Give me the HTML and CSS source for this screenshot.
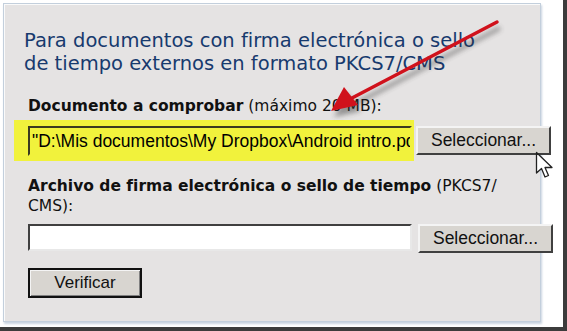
FILE: index.html
```html
<!DOCTYPE html>
<html lang="es">
<head>
    <meta charset="UTF-8">
    <title>Verificar firma</title>
    <link rel="stylesheet" href="styles.css">
</head>
<body>

<div class="frame">
    <div class="panel">
        <h2 class="titulo">Para documentos con firma electrónica o sello de tiempo externos en formato PKCS7/CMS</h2>

        <div class="campo">
            <label class="etiqueta"><b>Documento a comprobar</b> (máximo 20 MB):</label>
            <div class="fila">
                <div class="resaltado">
                    <div class="entrada">"D:\Mis documentos\My Dropbox\Android intro.pdf"</div>
                </div>
                <button class="btn-sel">Seleccionar...</button>
            </div>
        </div>

        <div class="campo">
            <label class="etiqueta"><b>Archivo de firma electrónica o sello de tiempo</b> (PKCS7/<br>CMS):</label>
            <div class="fila fila-vacia">
                <div class="entrada vacia"></div>
                <button class="btn-sel">Seleccionar...</button>
            </div>
        </div>

        <button class="btn-verificar">Verificar</button>
    </div>

    <!-- flecha roja de anotación -->
    <svg class="flecha" width="567" height="331" viewBox="0 0 567 331">
        <defs>
            <filter id="sombra" x="-20%" y="-20%" width="140%" height="140%">
                <feGaussianBlur stdDeviation="2.5"/>
            </filter>
        </defs>
        <g transform="translate(3,6)" opacity="0.45" filter="url(#sombra)">
            <line x1="497" y1="22" x2="352" y2="98" stroke="#333" stroke-width="4"/>
            <polygon points="331,111 344,87 358,105" fill="#333"/>
        </g>
        <line x1="497" y1="22" x2="352" y2="98" stroke="#d0121c" stroke-width="3.5" stroke-linecap="round"/>
        <polygon points="331,111 344,87 358,105" fill="#d0121c"/>
    </svg>

    <!-- cursor -->
    <svg class="cursor" width="22" height="30" viewBox="0 0 22 30">
        <path d="M1.5 1.5 L1.5 22 L6.5 17.5 L10 26 L13.5 24.5 L10 16.5 L17 16.5 Z" fill="#fff" stroke="#222" stroke-width="1.3" stroke-linejoin="round"/>
    </svg>
</div>

</body>
</html>
```

FILE: styles.css
```css
body {
    margin: 0;
    background: #fff;
    font-family: "DejaVu Sans", Verdana, sans-serif;
}

/* marco de la captura */
.frame {
    position: relative;
    width: 563px;
    height: 327px;
    border-right: 4px solid #3c3c3c;
    border-bottom: 4px solid #3c3c3c;
    background: #fff;
    overflow: hidden;
}

.panel {
    margin: 3px 0 0 3px;
    width: 538px;
    height: 319px;
    box-sizing: border-box;
    background: #e5e3e3;
    border: 1px solid #c3cfdc;
    box-shadow: inset 1px 1px 0 #fafafa, 1px 2px 2px #c9d4e0;
    padding: 25px 0 0 20px;
}

.titulo {
    margin: 0 0 21px 0;
    font-size: 19.5px;
    font-weight: normal;
    line-height: 23px;
    color: #173a6e;
    width: 470px;
}

.campo { margin-bottom: 15px; }

.etiqueta {
    display: block;
    margin-left: 4px;
    font-size: 15.5px;
    line-height: 20px;
    color: #111;
}

.etiqueta b { font-weight: bold; }

.fila {
    display: flex;
    align-items: center;
    margin-top: 4px;
}

.fila > * { flex-shrink: 0; }

.fila-vacia { margin-top: 5px; }

.resaltado {
    background: #f1f23c;
    margin-left: -10px;
    padding: 6px 2px 5px 14px;
}

.entrada {
    width: 384px;
    height: 30px;
    box-sizing: border-box;
    background: #fff;
    border: 2px solid;
    border-color: #404040 #e8e8e8 #e8e8e8 #404040;
    font-family: "Liberation Sans", Arial, sans-serif;
    font-size: 17.5px;
    line-height: 26px;
    padding-left: 2px;
    white-space: nowrap;
    overflow: hidden;
    color: #000;
}

.resaltado .entrada {
    background: #f1f23c;
    border-color: #3a3a20 #f1f23c #f1f23c #3a3a20;
}

.vacia {
    margin-left: 4px;
    height: 27px;
}

.btn-sel {
    margin-left: 2px;
    width: 135px;
    height: 29px;
    background: #d8d5d0;
    border: 2px solid;
    border-color: #f4f4f4 #404040 #404040 #f4f4f4;
    font-family: "Liberation Sans", Arial, sans-serif;
    font-size: 17.5px;
    color: #111;
    padding: 0;
}

.fila-vacia .btn-sel {
    margin-left: 6px;
    margin-top: 3px;
}

.btn-verificar {
    margin: 0 0 0 4px;
    width: 114px;
    height: 30px;
    background: #d8d5d0;
    border: 2px solid #111;
    box-shadow: inset 1px 1px 0 #f4f4f4, inset -1px -1px 0 #808080;
    font-family: "Liberation Sans", Arial, sans-serif;
    font-size: 17px;
    color: #111;
}

.flecha {
    position: absolute;
    left: 0;
    top: 0;
    pointer-events: none;
}

.cursor {
    position: absolute;
    left: 535px;
    top: 151px;
}
```
